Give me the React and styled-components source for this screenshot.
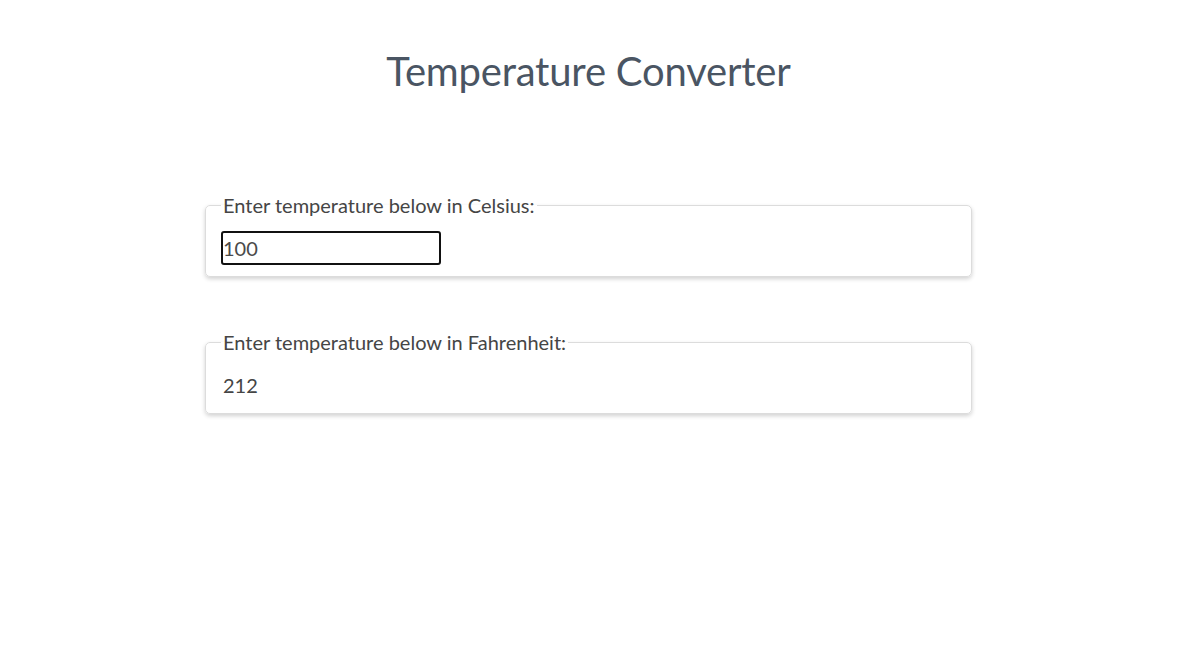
import React, { useEffect, useRef, useState } from "react"
import styled, { createGlobalStyle } from "styled-components"

const GlobalStyle = createGlobalStyle`
  body {
    margin: 0;
    background: #fff;
    font-family: Lato, "Open Sans", sans-serif;
  }
`

const Page = styled.main`
  padding: 0 7px 0 0;
  display: flex;
  flex-direction: column;
  align-items: center;
`

const Title = styled.h1`
  margin: 47px 0 98px 0;
  font-size: 40px;
  font-weight: 400;
  color: #4a5563;
  letter-spacing: -0.2px;
`

const Card = styled.fieldset`
  box-sizing: border-box;
  width: 767px;
  margin: 0 0 53px 0;
  padding: 14px 15px 11px 15px;
  border: 1px solid #dcdcdc;
  border-radius: 5px;
  box-shadow: 0 2px 4px rgba(0, 0, 0, 0.18);
`

const Legend = styled.legend`
  padding: 0 2px;
  font-size: 20px;
  line-height: 24px;
  color: #454545;
`

const TempInput = styled.input`
  display: block;
  box-sizing: border-box;
  width: 220px;
  height: 34px;
  padding: 0;
  border: 2px solid #111;
  border-radius: 3px;
  font-family: inherit;
  font-size: 20px;
  color: #4a4a4a;
  caret-color: #111;
  outline: none;
`

const Result = styled.div`
  height: 34px;
  padding: 0 2px;
  font-size: 20px;
  line-height: 34px;
  color: #454545;
`

const App = () => {
  const [celsius, setCelsius] = useState("100")
  const inputRef = useRef(null)

  useEffect(() => {
    const el = inputRef.current
    if (el) {
      el.focus()
      el.setSelectionRange(el.value.length, el.value.length)
    }
  }, [])

  const num = parseFloat(celsius)
  const fahrenheit = isNaN(num) ? "" : Math.round((num * 9 / 5 + 32) * 100) / 100

  return (
    <>
      <GlobalStyle />
      <Page>
        <Title>Temperature Converter</Title>
        <Card>
          <Legend>Enter temperature below in Celsius:</Legend>
          <TempInput
            ref={inputRef}
            value={celsius}
            onChange={(e) => setCelsius(e.target.value)}
          />
        </Card>
        <Card>
          <Legend>Enter temperature below in Fahrenheit:</Legend>
          <Result>{fahrenheit}</Result>
        </Card>
      </Page>
    </>
  )
}

export default App
